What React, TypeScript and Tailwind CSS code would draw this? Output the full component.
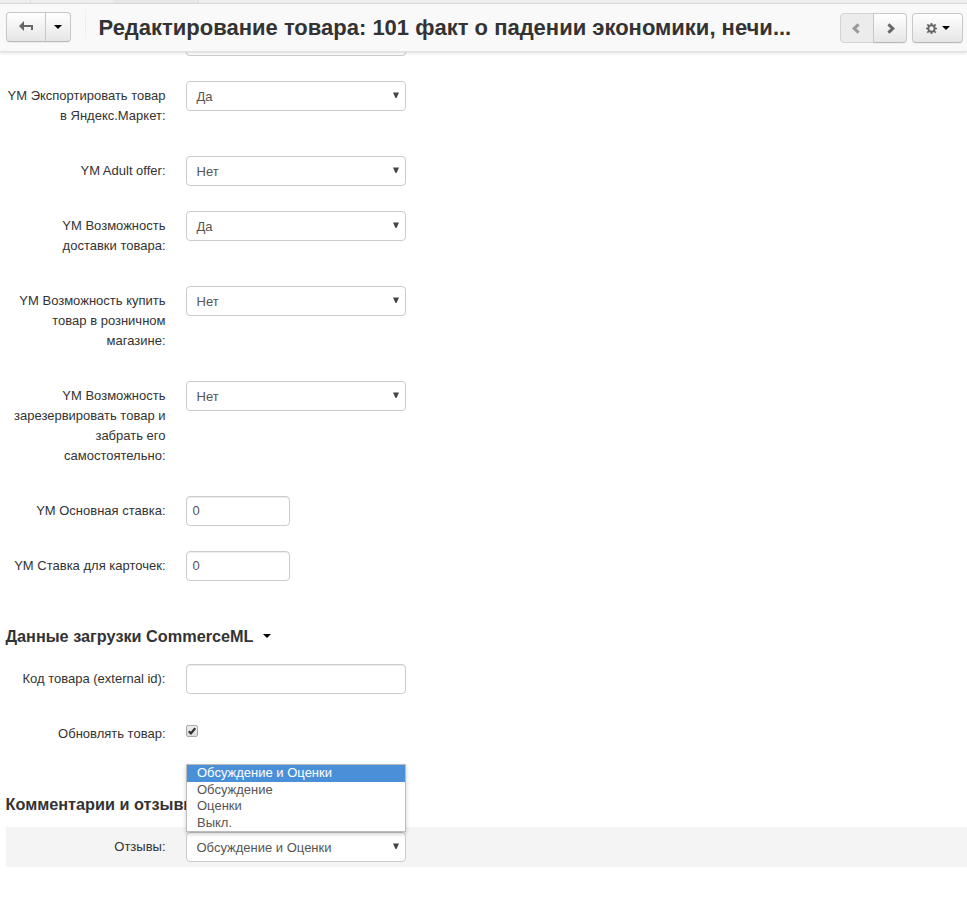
import React from "react";

const btn = "flex items-center justify-center border border-[#c8c8c8] border-b-[#b8b8b8] bg-gradient-to-b from-white to-[#e6e6e6] shadow-[0_1px_1px_rgba(0,0,0,0.05)]";

function Caret({ className = "" }: { className?: string }) {
  return (
    <svg className={className} width="8" height="4" viewBox="0 0 8 4">
      <path d="M0 0h8L4 4z" fill="#000" />
    </svg>
  );
}

function Row({ lines, children, active = false }: { lines: string[]; children: React.ReactNode; active?: boolean }) {
  return (
    <div className={`ml-[6px] mb-[15px] flex items-start py-[5px] ${active ? "bg-[#f4f4f4]" : ""}`}>
      <div className="flex w-[160px] shrink-0 flex-col items-end py-[5px] pr-[0.5px] text-right text-[13px] leading-[20px] whitespace-nowrap">
        {lines.map((l) => (
          <span key={l}>{l}</span>
        ))}
      </div>
      <div className="relative ml-[20px]">{children}</div>
    </div>
  );
}

function Select({ value }: { value: string }) {
  return (
    <div className="flex h-[30px] w-[220px] items-center justify-between rounded-[4px] border border-[#ccc] bg-white pr-[6px] pl-[9.5px] text-[13px] text-[#555]">
      <span className="relative top-px">{value}</span>
      <svg width="6" height="6" viewBox="0 0 6 6" className="relative -top-px">
        <path d="M0 .5h6L3.500 6h-1z" fill="#444" />
      </svg>
    </div>
  );
}

function Input({ value, className }: { value: string; className: string }) {
  return (
    <div className={`flex h-[30px] items-center rounded-[4px] border border-[#ccc] bg-white pr-[6px] pl-[5.5px] text-[13px] text-[#555] shadow-[inset_0_1px_1px_rgba(0,0,0,0.075)] ${className}`}>
      {value}
    </div>
  );
}

function Heading({ children, className }: { children: React.ReactNode; className: string }) {
  return <h4 className={`ml-[5.5px] flex h-[20px] items-center text-[16.25px] leading-[20px] font-bold whitespace-nowrap ${className}`}>{children}</h4>;
}

export default function App() {
  return (
    <div className="h-[900px] w-[967px] overflow-hidden bg-white font-['Liberation_Sans',Arial,sans-serif] text-[#333]">
      <div className="flex h-[4px] border-b border-[#d9d9d9] bg-[#eee]">
        <div className="ml-[30px] w-px bg-[#ddd]" />
        <div className="ml-[82px] w-[85px] bg-[#e6e6e6]" />
        <div className="w-px bg-[#d9d9d9]" />
      </div>
      <header className="relative flex h-[47px] items-start bg-[#f9f9f9] shadow-[0_1px_1px_#e2e2e2,0_2px_3px_rgba(0,0,0,0.14)]">
        <div className="mt-[8px] ml-[6px] flex h-[30px]">
          <div className={`${btn} w-[40px] rounded-l-[4px]`}>
            <svg width="14" height="10" viewBox="0 0 14 10" className="relative -top-px">
              <path d="M0 5 5 0v4h9v5h-2V6H5v4z" fill="#666" />
            </svg>
          </div>
          <div className={`${btn} -ml-px w-[26px] rounded-r-[4px]`}>
            <Caret />
          </div>
        </div>
        <div className="ml-[14px] h-[42px] w-px bg-gradient-to-b from-[#f9f9f9] via-[#e9e9e9] to-[#f9f9f9]" />
        <h1 className="mt-[9px] ml-[12.5px] w-[741.5px] text-[22px] leading-[30px] font-bold whitespace-nowrap">
          Редактирование товара: 101 факт о падении экономики, нечи...
        </h1>
        <div className="mt-[9px] flex h-[30px]">
          <div className="flex w-[34px] items-center justify-center rounded-l-[4px] border border-[#d4d4d4] bg-[#ececec]">
            <svg width="8" height="11" viewBox="0 0 8 11" className="relative -left-px">
              <path d="M6.600 1.400 2.200 5.500l4.400 4.100" fill="none" stroke="#999" strokeWidth="3" />
            </svg>
          </div>
          <div className={`${btn} -ml-px w-[34px] rounded-r-[4px]`}>
            <svg width="8" height="11" viewBox="0 0 8 11" className="relative left-px">
              <path d="M1.400 1.400 5.800 5.500 1.400 9.600" fill="none" stroke="#666" strokeWidth="3" />
            </svg>
          </div>
        </div>
        <div className={`${btn} mt-[9px] ml-[5px] h-[30px] w-[51px] gap-[5px] rounded-[4px]`}>
          <svg width="11" height="11" viewBox="0 0 11 11">
            <circle cx="5.5" cy="5.5" r="3.200" fill="none" stroke="#666" strokeWidth="2" />
            <path d="M5.500 0v2M5.500 9v2M0 5.500h2M9 5.500h2M1.300 1.300l1.700 1.700M8 8l1.700 1.700M1.300 9.700 3 8M8 3l1.700-1.700" stroke="#666" strokeWidth="1.700" />
          </svg>
          <Caret />
        </div>
      </header>
      <div className="ml-[186px] h-[5px] w-[220px] rounded-b-[4px] border border-t-0 border-[#ccc]" />
      <main className="pt-[20px]">
        <Row lines={["YM Экспортировать товар", "в Яндекс.Маркет:"]}><Select value="Да" /></Row>
        <Row lines={["YM Adult offer:"]}><Select value="Нет" /></Row>
        <Row lines={["YM Возможность", "доставки товара:"]}><Select value="Да" /></Row>
        <Row lines={["YM Возможность купить", "товар в розничном", "магазине:"]}><Select value="Нет" /></Row>
        <Row lines={["YM Возможность", "зарезервировать товар и", "забрать его", "самостоятельно:"]}><Select value="Нет" /></Row>
        <Row lines={["YM Основная ставка:"]}><Input value="0" className="w-[104px]" /></Row>
        <Row lines={["YM Ставка для карточек:"]}><Input value="0" className="w-[104px]" /></Row>

        <Heading className="mt-[40px] mb-[13px]">
          Данные загрузки CommerceML <Caret className="ml-[9px]" />
        </Heading>
        <Row lines={["Код товара (external id):"]}><Input value="" className="w-[220px]" /></Row>
        <Row lines={["Обновлять товар:"]}>
          <div className="mt-[6px] flex h-[12px] w-[12px] items-center justify-center rounded-[2px] border border-[#aaa] bg-gradient-to-b from-[#eee] to-[#ddd]">
            <svg width="8" height="8" viewBox="0 0 8 8">
              <path d="M.8 4.300 2.900 6.400 7.200 1.200" fill="none" stroke="#333" strokeWidth="2.200" />
            </svg>
          </div>
        </Row>

        <Heading className="mt-[40px] mb-[13px]">Комментарии и отзывы</Heading>
        <Row lines={["Отзывы:"]} active>
          <Select value="Обсуждение и Оценки" />
          <div className="absolute bottom-[30px] left-0 w-[220px] border border-[#bbb] bg-white text-[13px] text-[#555] shadow-[0_2px_4px_rgba(0,0,0,0.2)]">
            <div className="h-[17px] bg-[#4a90d9] pl-[10px] leading-[16px] text-white">Обсуждение и Оценки</div>
            <div className="h-[16px] pl-[10px] leading-[16px]">Обсуждение</div>
            <div className="h-[17px] pl-[10px] leading-[16px]">Оценки</div>
            <div className="h-[16px] pl-[10px] leading-[16px]">Выкл.</div>
          </div>
        </Row>
      </main>
    </div>
  );
}
